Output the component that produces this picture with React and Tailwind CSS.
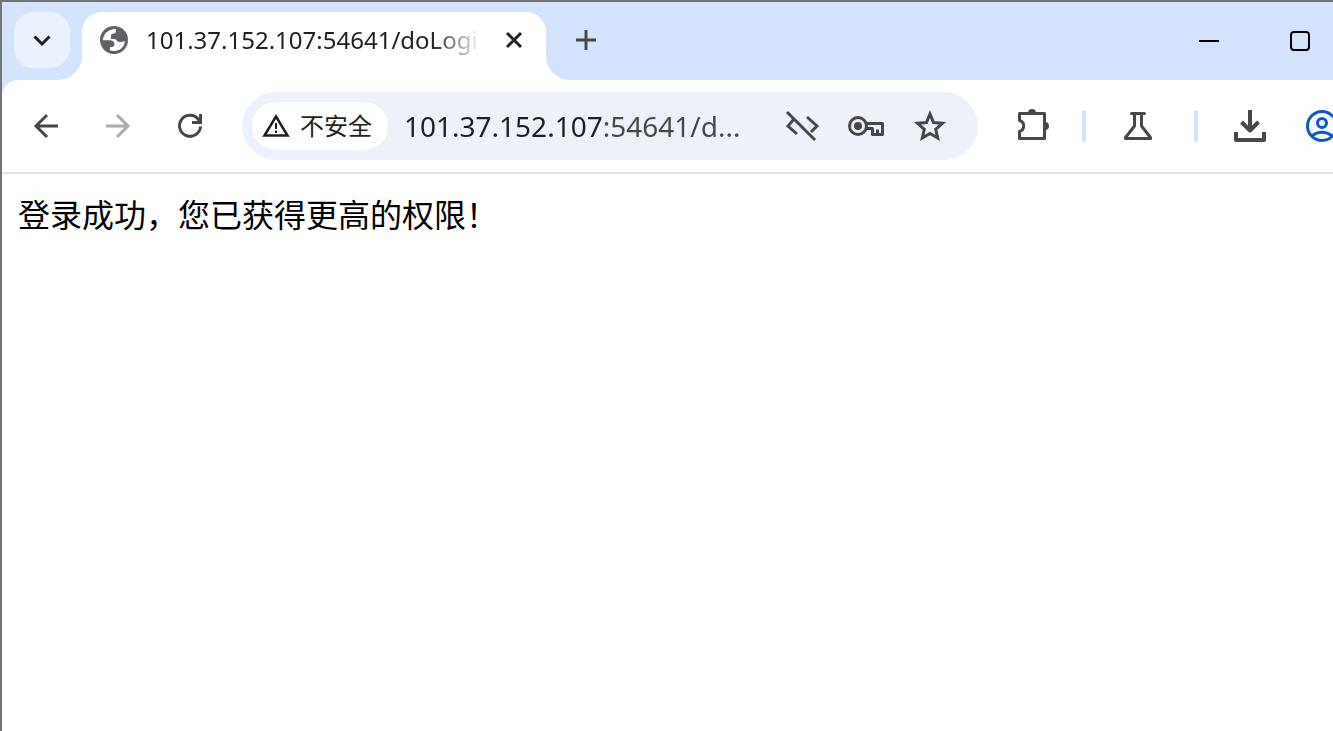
import React from "react";

function Icon({ size = 40, width = 3, className = "", children }) {
  return (
    <svg
      className={"shrink-0 " + className}
      width={size}
      height={size}
      viewBox={"0 0 " + size + " " + size}
      fill="none"
      stroke="currentColor"
      strokeWidth={width}
      aria-hidden="true"
    >
      {children}
    </svg>
  );
}

function TabStrip() {
  return (
    <header className="flex h-[78px] items-center bg-[#d3e3fd] pl-3">
      <button
        aria-label="搜索标签页"
        className="mt-[10px] flex h-14 w-14 shrink-0 items-center justify-center self-start rounded-[20px] bg-[#e9f1fe] text-[#1f1f1f]"
      >
        <Icon size={20}>
          <path d="M2.5 6.5 10 14l7.5-7.5" />
        </Icon>
      </button>

      <div className="relative ml-3 flex h-[68px] w-[464px] shrink-0 items-center self-end rounded-t-[20px] bg-white pb-3 pl-4">
        <svg
          className="absolute bottom-0 -left-6 h-6 w-6 fill-white"
          viewBox="0 0 24 24"
          aria-hidden="true"
        >
          <path d="M24 0v24H0A24 24 0 0 0 24 0z" />
        </svg>
        <svg
          className="absolute -right-6 bottom-0 h-6 w-6 fill-white"
          viewBox="0 0 24 24"
          aria-hidden="true"
        >
          <path d="M0 0v24h24A24 24 0 0 1 0 0z" />
        </svg>
        <Icon size={32} width={0} className="text-[#5f6368]">
          <circle cx="16" cy="16" r="14" fill="currentColor" />
          <path
            fill="#fff"
            d="M5 16.300C5 10 10 5 17.800 5v2.500c0 1.500-1 2-2.600 2C13.500 9.500 13 10.500 13 12v3h3.500c2 0 2.500 3 4.500 3h2.500c1.500 0 2-.7 3.300-.7C26.500 23 22 27 16 27c-1.500 0-3-.3-4-.7v-3.300h2c1.500 0 2.500-1 2.500-2.500 0-3-2-4.200-4.500-4.200z"
          />
        </Icon>
        <span className="ml-4 w-[336px] bg-linear-to-r from-[#1f1f1f] from-85% to-transparent bg-clip-text text-2xl whitespace-nowrap text-transparent">
          101.37.152.107:54641/doLogi
        </span>
        <button aria-label="关闭" className="ml-4 text-[#1f1f1f]">
          <Icon size={32}>
            <path d="m9 9 14 14M23 9 9 23" />
          </Icon>
        </button>
      </div>

      <button aria-label="打开新的标签页" className="ml-5 text-[#474747]">
        <Icon>
          <path d="M20 9v20M10 19h20" />
        </Icon>
      </button>

      <div className="ml-auto flex shrink-0 gap-[51px] pr-[13px] text-black">
        <button aria-label="最小化">
          <Icon width={2}>
            <path d="M10 20h20" />
          </Icon>
        </button>
        <button aria-label="最大化">
          <Icon width={2}>
            <rect x="11" y="11" width="18" height="18" rx="3" />
          </Icon>
        </button>
      </div>
    </header>
  );
}

function AddressBar() {
  return (
    <div className="ml-8 flex h-[68px] min-w-0 flex-1 items-center rounded-full bg-[#ecf1fa] pr-7 pl-[10px] text-[#474747]">
      <button className="flex h-12 w-[136px] shrink-0 items-center gap-2 rounded-full bg-white pl-2 text-2xl text-[#1f1f1f]">
        <Icon size={32} width={2.5}>
          <path d="M4.500 25.500 16 6.500l11.500 19z" />
          <path d="M16 13v6M16 20.500v2.500" strokeWidth="2" />
        </Icon>
        不安全
      </button>
      <input
        type="text"
        aria-label="地址和搜索栏"
        defaultValue="101.37.152.107:54641/d..."
        className="ml-4 min-w-0 flex-1 bg-[linear-gradient(to_right,#1f1f1f_200px,#474747_200px)] bg-clip-text text-[28px] text-transparent outline-none"
      />
      <div className="flex shrink-0 gap-6">
        <button aria-label="链接">
          <Icon>
            <path d="m5 6 28 28M12 13l-6 7 9 8M25 11l10 9-6 6" />
          </Icon>
        </button>
        <button aria-label="管理密码">
          <Icon>
            <circle cx="12" cy="20" r="8.500" />
            <circle cx="12" cy="20" r="4" fill="currentColor" stroke="none" />
            <path
              strokeLinejoin="round"
              d="M20 17.500h16.500v11h-10v-6H20M31.500 28v-4.500"
            />
          </Icon>
        </button>
        <button aria-label="为此标签页添加书签">
          <Icon>
            <path d="m20 8 3.500 8.500 9 .8-6.800 6 2 8.700L20 27.500 12.300 32l2-8.700-6.800-6 9-.8z" />
          </Icon>
        </button>
      </div>
    </div>
  );
}

function Toolbar() {
  return (
    <nav className="flex h-[94px] items-center border-b-2 border-[#e1e1e1] bg-white pl-6 text-[#474747]">
      <div className="flex shrink-0 gap-8">
        <button aria-label="返回">
          <Icon>
            <path d="M32 20H10M21 9 10 20l11 11" />
          </Icon>
        </button>
        <button aria-label="前进" className="text-[#ababab]">
          <Icon>
            <path d="M8 20h22M19 9l11 11-11 11" />
          </Icon>
        </button>
        <button aria-label="重新加载">
          <Icon>
            <path d="M30.500 20.500A10.500 10.500 0 1 1 28 13l2 3M30.500 8v8.500H22" />
          </Icon>
        </button>
      </div>

      <AddressBar />

      <div className="ml-8 flex shrink-0 items-center">
        <button aria-label="扩展程序">
          <Icon>
            <path
              strokeLinejoin="round"
              d="M9.500 7.500h25v25h-25v-7a5.700 5.700 0 0 0 0-11z"
            />
            <path
              fill="currentColor"
              stroke="none"
              d="M18 7a4 4 0 0 1 8 0zM35 16a4 4 0 0 1 0 8z"
            />
          </Icon>
        </button>
        <span className="mx-8 h-8 w-1 rounded-full bg-[#d3e3fd]" />
        <button aria-label="实验">
          <Icon>
            <path
              strokeLinejoin="round"
              strokeLinecap="round"
              d="M13.500 7.500h13M16.500 8v12L7.500 31.500v1h25v-1L23.500 20V8"
            />
          </Icon>
        </button>
        <span className="mr-8 ml-9 h-8 w-1 rounded-full bg-[#d3e3fd]" />
        <button aria-label="下载">
          <Icon width={4}>
            <path
              strokeLinejoin="round"
              d="M20 4v20M11.500 16l8.500 8.500 8.500-8.500M6 26v8h28v-8"
            />
          </Icon>
        </button>
        <button
          aria-label="个人资料"
          className="ml-8 w-[31px] overflow-hidden text-[#0b57d0]"
        >
          <Icon>
            <circle cx="20" cy="20" r="14.500" />
            <circle cx="20" cy="17" r="4.500" />
            <path d="M10 30c6-5 14-5 20 0" />
          </Icon>
        </button>
      </div>
    </nav>
  );
}

export default function App() {
  return (
    <div className="min-h-screen overflow-hidden border-t-2 border-l-2 border-[#757575] bg-white font-['Noto_Sans','Noto_Sans_CJK_SC',sans-serif]">
      <TabStrip />
      <div className="bg-[#d3e3fd]">
        <div className="overflow-hidden rounded-tl-2xl">
          <Toolbar />
        </div>
      </div>
      <main className="px-4 pt-4 text-[32px] leading-[50px] text-black">
        <p>登录成功，您已获得更高的权限！</p>
      </main>
    </div>
  );
}
